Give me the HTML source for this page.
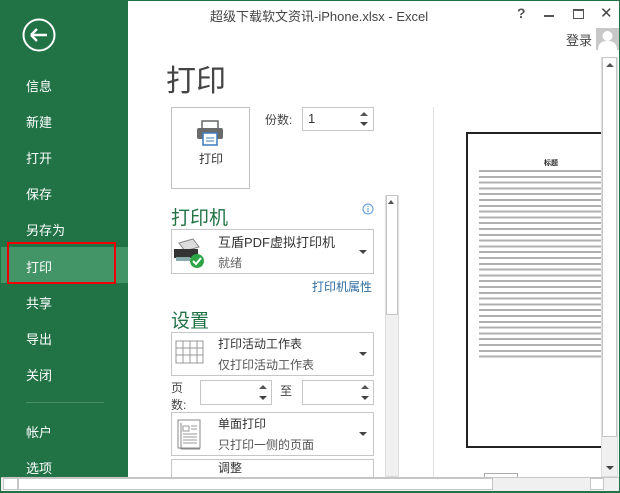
<!DOCTYPE html>
<html><head><meta charset="utf-8"><style>
*{margin:0;padding:0;box-sizing:border-box}
body{width:620px;height:493px;overflow:hidden;background:#fff;font-family:"Liberation Sans","Noto Sans CJK SC",sans-serif;position:relative;color:#444}
.a{position:absolute}
#frame{left:0;top:0;width:620px;height:493px;border:1px solid #217346;border-bottom:2px solid #217346}
#side{left:0;top:0;width:128px;height:477px;background:#217346}
.it{position:absolute;left:26px;color:#fff;font-size:13px}
.box{position:absolute;border:1px solid #c6c6c6;background:#fff}
.arr{position:absolute;width:0;height:0;border-left:4px solid transparent;border-right:4px solid transparent;border-top:4px solid #444}
.g{color:#217346}
</style></head><body>
<div class="a" id="side"></div>
<svg class="a" style="left:22px;top:18px" width="34" height="34"><circle cx="17" cy="17" r="15.5" fill="none" stroke="#fff" stroke-width="2"/><path d="M9 17h16M9 17l6-6M9 17l6 6" stroke="#fff" stroke-width="2.4" fill="none"/></svg>
<div class="it" style="top:76px">信息</div>
<div class="it" style="top:112px">新建</div>
<div class="it" style="top:148px">打开</div>
<div class="it" style="top:184px">保存</div>
<div class="it" style="top:220px">另存为</div>
<div class="a" style="left:0;top:247px;width:128px;height:36px;background:#439467"></div>
<div class="a" style="left:7px;top:242px;width:109px;height:42px;border:2px solid #e00"></div>
<div class="it" style="top:257px">打印</div>
<div class="it" style="top:293px">共享</div>
<div class="it" style="top:329px">导出</div>
<div class="it" style="top:365px">关闭</div>
<div class="a" style="left:26px;top:402px;width:78px;height:1px;background:#4a8e68"></div>
<div class="it" style="top:422px">帐户</div>
<div class="it" style="top:458px">选项</div>

<div class="a" style="left:210px;top:6px;font-size:13px;color:#444">超级下载软文资讯-iPhone.xlsx - Excel</div>
<div class="a" style="left:517px;top:5px;font-size:14px;font-weight:bold;color:#555">?</div>
<div class="a" style="left:544px;top:15px;width:10px;height:2px;background:#555"></div>
<div class="a" style="left:573px;top:9px;width:11px;height:10px;border:1px solid #555;border-top-width:2px"></div>
<div class="a" style="left:600px;top:4px;font-size:15px;color:#444">✕</div>
<div class="a" style="left:566px;top:30px;font-size:13px;color:#444">登录</div>
<div class="a" style="left:596px;top:28px;width:23px;height:22px;background:#c8c8c8;overflow:hidden"><svg width="23" height="22"><circle cx="11.5" cy="8" r="5" fill="#fff"/><path d="M2 22c0-7 4-9 9.5-9s9.5 2 9.5 9z" fill="#fff"/></svg></div>

<div class="a" style="left:166px;top:56px;font-size:30px;color:#444">打印</div>
<div class="box" style="left:171px;top:107px;width:79px;height:82px;border-color:#c0c0c0"></div>
<svg class="a" style="left:196px;top:120px" width="28" height="26"><rect x="6" y="1" width="16" height="8" fill="#fff" stroke="#666" stroke-width="1.5"/><rect x="1" y="8" width="26" height="11" rx="2" fill="#6b6b6b"/><rect x="7" y="13" width="14" height="12" fill="#fff" stroke="#3b7bbf" stroke-width="1.5"/><path d="M10 18h8M10 21h8" stroke="#3b7bbf"/></svg>
<div class="a" style="left:199px;top:150px;font-size:12px;color:#333">打印</div>
<div class="a" style="left:265px;top:111px;font-size:12px;color:#444">份数:</div>
<div class="box" style="left:302px;top:107px;width:72px;height:24px"><span style="position:absolute;left:5px;top:3px;font-size:13px;color:#333">1</span></div>
<div class="arr" style="left:360px;top:112px;border-top:none;border-bottom:4px solid #555"></div>
<div class="arr" style="left:360px;top:122px"></div>

<div class="a g" style="left:171px;top:203px;font-size:19px">打印机</div>
<svg class="a" style="left:362px;top:203px" width="12" height="12"><circle cx="6" cy="6" r="5" fill="none" stroke="#5a9be0"/><path d="M6 5v4M6 3v1" stroke="#5a9be0"/></svg>
<div class="box" style="left:171px;top:229px;width:203px;height:45px"></div>
<svg class="a" style="left:173px;top:237px" width="34" height="32"><path d="M6 6l14-4 6 8-14 4z" fill="#ddd" stroke="#888"/><rect x="1" y="12" width="24" height="9" fill="#333"/><rect x="3" y="20" width="14" height="4" fill="#8aa"/><circle cx="24" cy="24" r="7" fill="#2da547"/><path d="M20 24l3 3 5-6" stroke="#fff" stroke-width="2" fill="none"/></svg>
<div class="a" style="left:218px;top:232px;font-size:13px;color:#333">互盾PDF虚拟打印机</div>
<div class="a" style="left:218px;top:254px;font-size:12px;color:#666">就绪</div>
<div class="arr" style="left:359px;top:250px"></div>
<div class="a" style="left:312px;top:278px;font-size:12px;color:#2e6ca4">打印机属性</div>

<div class="a g" style="left:171px;top:306px;font-size:19px">设置</div>
<div class="box" style="left:171px;top:332px;width:203px;height:44px"></div>
<svg class="a" style="left:175px;top:340px" width="30" height="28"><path d="M1 1h27v22H1z M1 8h27M1 15h27M8 1v22M15 1v22M22 1v22" stroke="#999" fill="none"/></svg>
<div class="a" style="left:218px;top:335px;font-size:12px;color:#333">打印活动工作表</div>
<div class="a" style="left:218px;top:356px;font-size:12px;color:#555">仅打印活动工作表</div>
<div class="arr" style="left:359px;top:352px"></div>
<div class="a" style="left:171px;top:380px;font-size:12px;color:#444;line-height:17px">页<br>数:</div>
<div class="box" style="left:200px;top:380px;width:72px;height:25px"></div>
<div class="arr" style="left:259px;top:385px;border-top:none;border-bottom:4px solid #555"></div>
<div class="arr" style="left:259px;top:396px"></div>
<div class="a" style="left:280px;top:382px;font-size:12px;color:#444">至</div>
<div class="box" style="left:302px;top:380px;width:72px;height:25px"></div>
<div class="arr" style="left:361px;top:385px;border-top:none;border-bottom:4px solid #555"></div>
<div class="arr" style="left:361px;top:396px"></div>
<div class="box" style="left:171px;top:412px;width:203px;height:44px"></div>
<svg class="a" style="left:177px;top:418px" width="26" height="32"><path d="M1 2h22v28H1z" stroke="#888" fill="#fff"/><path d="M4 5v26h19" stroke="#888" fill="none"/><path d="M6 8h6v5H6zM14 8h6M14 11h6M6 16h14M6 19h14M6 22h14M6 25h14" stroke="#999" fill="none"/></svg>
<div class="a" style="left:218px;top:415px;font-size:12px;color:#333">单面打印</div>
<div class="a" style="left:218px;top:436px;font-size:12px;color:#555">只打印一侧的页面</div>
<div class="arr" style="left:359px;top:432px"></div>
<div class="box" style="left:171px;top:459px;width:203px;height:30px"></div>
<div class="a" style="left:218px;top:459px;font-size:12px;color:#333;height:17px;overflow:hidden">调整</div>

<div class="box" style="left:385px;top:195px;width:14px;height:282px;background:#f0f0f0;border-color:#ddd"></div>
<div class="box" style="left:386px;top:195px;width:12px;height:120px"></div>
<div class="arr" style="left:388px;top:200px;border-top:none;border-bottom:4px solid #555;border-left-width:3px;border-right-width:3px"></div>
<div class="a" style="left:433px;top:107px;width:1px;height:370px;background:#e0e0e0"></div>

<div class="a" style="left:466px;top:132px;width:140px;height:316px;border-left:2px solid #222;border-top:2px solid #222;border-bottom:2px solid #222;background:#fff"></div>
<div class="a" style="left:544px;top:158px;font-size:7px;font-weight:bold;color:#222">标题</div>
<div class="a" style="left:479px;top:168px;width:124px;height:190px;background:repeating-linear-gradient(#fff 0 2px,#b0b0b0 2px 4px,#fff 4px 5.8px)"></div>

<div class="box" style="left:601px;top:57px;width:17px;height:420px;background:#f0f0f0;border-color:#ddd"></div>
<div class="box" style="left:602px;top:57px;width:15px;height:380px"></div>
<div class="arr" style="left:606px;top:63px;border-top:none;border-bottom:4px solid #555"></div>
<div class="arr" style="left:606px;top:466px"></div>
<div class="a" style="left:484px;top:473px;width:34px;height:4px;border:1px solid #aaa;border-bottom:none"></div>

<div class="a" style="left:1px;top:477px;width:618px;height:14px;background:#f0f0f0;border-top:1px solid #c6c6c6"></div>
<div class="box" style="left:3px;top:478px;width:15px;height:12px"></div>
<div class="box" style="left:18px;top:478px;width:475px;height:12px"></div>
<div class="box" style="left:590px;top:478px;width:14px;height:12px"></div>
<div class="a" id="frame"></div>
</body></html>
